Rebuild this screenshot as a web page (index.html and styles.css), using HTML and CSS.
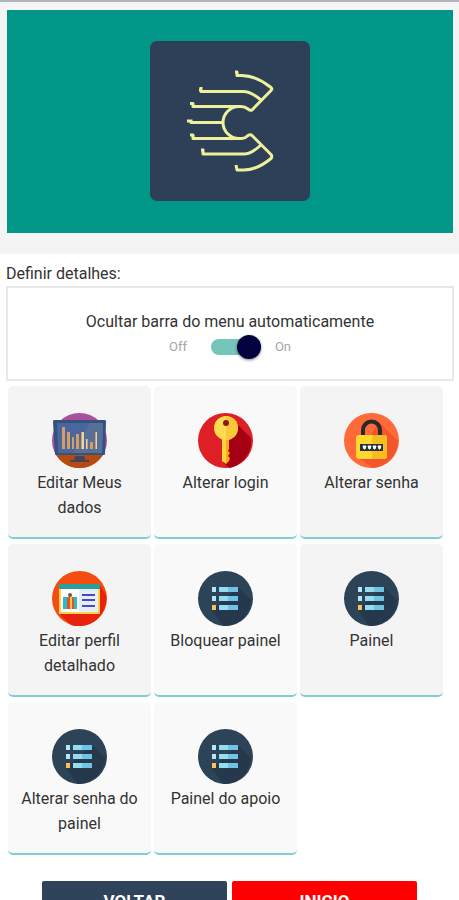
FILE: index.html
```html
<!DOCTYPE html>
<html lang="pt-BR">
<head>
    <meta charset="UTF-8">
    <meta name="viewport" content="width=device-width, initial-scale=1.0">
    <title>Definir detalhes</title>
    <link rel="stylesheet" href="styles.css">
</head>
<body>

    <!-- Shared icon -->
    <svg class="sprite" aria-hidden="true">
        <symbol id="icon-list" viewBox="0 0 55 55">
            <circle cx="27.5" cy="27.5" r="27.5" fill="#2c4358"/>
            <path d="M40 16 L53 29 A27.5 27.5 0 0 1 25 55 L14 39 Z" fill="#26394c"/>
            <path d="M14 16h4v5h-4zM14 25h4v5h-4z" fill="#b4e7f8"/>
            <path d="M14 34h4v5h-4z" fill="#f6c358"/>
            <path d="M21 16h19v5h-19zM21 25h19v5h-19zM21 34h19v5h-19z" fill="#6fc4e6"/>
            <path d="M21 16h9v5h-9zM21 25h9v5h-9zM21 34h9v5h-9z" fill="#93dcf2"/>
        </symbol>
    </svg>

    <header class="header">
        <div class="banner">
            <svg class="logo" viewBox="0 0 160 160" role="img" aria-label="Logo">
                <rect width="160" height="160" rx="7" fill="#2e4057"/>
                <g fill="none" stroke="#eff09c" stroke-width="3" stroke-linejoin="round">
                    <path d="M85 31h2v3.500h5q15 .5 29 12q1.500 1.500 0 3L102 69q-1.500 1-4-1-3-2.500-7-2.500H43v-3h-3"/>
                    <path d="M51 46v4.500H93q8 0 18 8.500M49 49h3"/>
                    <path d="M91 65.500h-2a16 16 0 0 0 0 32h2"/>
                    <path d="M73 81.500H41v-3M37 80h5"/>
                    <path d="M40 94h3v3.500h49q3 0 6-3 2.500-1.500 4 0l19 19q1.500 2 0 4-14 11.500-27 11.500h-7l-1-5"/>
                    <path d="M53 108v5h41q7 0 17-9M51 109h3"/>
                </g>
            </svg>
        </div>
    </header>

    <main>
        <section class="details">
            <h1 class="details-title">Definir detalhes:</h1>
            <div class="details-box">
                <p class="details-label" id="hideMenuLabel">Ocultar barra do menu automaticamente</p>
                <label class="switch">
                    <span>Off</span>
                    <input type="checkbox" role="switch" class="switch-input" aria-labelledby="hideMenuLabel" checked>
                    <span>On</span>
                </label>
            </div>
        </section>

        <nav class="cards">
            <a class="card" href="#dados">
                <svg class="card-icon" viewBox="0 0 55 55" aria-hidden="true">
                    <circle cx="27.5" cy="27.5" r="27.5" fill="#a9519b"/>
                    <path d="M3 40h49a27.5 27.5 0 0 1-49 0z" fill="#b94a0d"/>
                    <path d="M2 7h51q1 0 1 2l-1 32q0 1-1 1H4q-1 0-1-1L1 9q0-2 1-2z" fill="#34517f"/>
                    <path d="M5 10h46l-1 30H6z" fill="#49679c"/>
                    <path d="M38 10h13l-1 30H21z" fill="#567198"/>
                    <path d="M23 43h9l1 4h4v2H18v-2h4z" fill="#40445c"/>
                    <path d="M10 14h3v22h-3zM15 19h3v17h-3zM20 24h2v12h-2zM24 21h3v15h-3zM29 19h3v17h-3zM34 26h2v10h-2zM38 29h3v7h-3zM43 19h2v17h-2z" fill="#d69c65"/>
                    <path d="M30 19h2v17h-2zM34 26h1v10h-1zM44 19h1v17h-1z" fill="#e9d3aa"/>
                </svg>
                <span>Editar Meus dados</span>
            </a>
            <a class="card card-light" href="#login">
                <svg class="card-icon" viewBox="0 0 55 55" aria-hidden="true">
                    <circle cx="27.5" cy="27.5" r="27.5" fill="#df1f26"/>
                    <path d="M36 8l17 17A27.5 27.5 0 0 1 31 55l-6-6z" fill="#a50014"/>
                    <path d="M24 24h7v12l-1 2 2 2-2 3 2 2-1 3-3 3-4-3z" fill="#f7ac18"/>
                    <path d="M24 24h4v26l-4-2z" fill="#ffd33c"/>
                    <circle cx="28" cy="15" r="12" fill="#ffdb4f"/>
                    <path d="M28 3a12 12 0 0 1 0 24z" fill="#f9c838"/>
                    <circle cx="28" cy="10" r="3" fill="#8c1717"/>
                </svg>
                <span>Alterar login</span>
            </a>
            <a class="card" href="#senha">
                <svg class="card-icon" viewBox="0 0 55 55" aria-hidden="true">
                    <circle cx="27.5" cy="27.5" r="27.5" fill="#ff6a3b"/>
                    <path d="M35 9l19 19A27.5 27.5 0 0 1 29 55L13 44z" fill="#f5552d"/>
                    <path d="M19 23v-6a8.5 8.500 0 0 1 17 0v6" fill="none" stroke="#292929" stroke-width="4"/>
                    <rect x="12" y="22" width="31" height="24" rx="3" fill="#ffd82e"/>
                    <path d="M28 22h12q3 0 3 3v18q0 3-3 3H28z" fill="#f6bd20"/>
                    <path d="M16 31h23v7H16z" fill="#28313c"/>
                    <path d="M19 33h3l-1 3h-1zM24 33h3l-1 3h-1zM29 33h3l-1 3h-1zM34 33h3l-1 3h-1z" fill="#fff" stroke="#fff" stroke-width="1"/>
                </svg>
                <span>Alterar senha</span>
            </a>
            <a class="card" href="#perfil">
                <svg class="card-icon" viewBox="0 0 55 55" aria-hidden="true">
                    <circle cx="27.5" cy="27.5" r="27.5" fill="#f34d10"/>
                    <path d="M48 14l6 10A27.5 27.5 0 0 1 19 54L7 43z" fill="#e8230b"/>
                    <path d="M7 13h41v30H7z" fill="#ffd04c"/>
                    <path d="M9 17h18v24H9z" fill="#fff"/>
                    <path d="M27 17h19v24H27z" fill="#e6edf5"/>
                    <path d="M7 13h41v5H7z" fill="#289f9c"/>
                    <path d="M11 26h14v12H11z" fill="#21bfd1"/>
                    <path d="M15 27l3-2 4 2v11h-7z" fill="#e65322"/>
                    <path d="M18 25h2v13h-2z" fill="#ffc34d"/>
                    <circle cx="18" cy="24" r="2" fill="#76553c"/>
                    <path d="M30 24h13M30 29h13M30 35h13" stroke="#454bc0" stroke-width="2"/>
                </svg>
                <span>Editar perfil detalhado</span>
            </a>
            <a class="card card-light" href="#bloquear">
                <svg class="card-icon" aria-hidden="true"><use href="#icon-list"/></svg>
                <span>Bloquear painel</span>
            </a>
            <a class="card" href="#painel">
                <svg class="card-icon" aria-hidden="true"><use href="#icon-list"/></svg>
                <span>Painel</span>
            </a>
            <a class="card card-light" href="#senha-painel">
                <svg class="card-icon" aria-hidden="true"><use href="#icon-list"/></svg>
                <span>Alterar senha do painel</span>
            </a>
            <a class="card card-light" href="#apoio">
                <svg class="card-icon" aria-hidden="true"><use href="#icon-list"/></svg>
                <span>Painel do apoio</span>
            </a>
        </nav>

        <div class="actions">
            <button type="button" class="btn btn-back">VOLTAR</button>
            <button type="button" class="btn btn-home">INICIO</button>
        </div>
    </main>

</body>
</html>
```
FILE: styles.css
```css
* {
    box-sizing: border-box;
}
body {
    margin: 0;
    font-family: Roboto, "Liberation Sans", sans-serif;
    font-size: 16px;
    line-height: 25px;
    color: #333;
    background-color: #fff;
}
.sprite {
    display: none;
}

/* Header */
.header {
    padding: 8px 6px 21px 7px;
    border-top: 2px solid #b1b5b9;
    background-color: #f4f4f4;
}
.banner {
    display: flex;
    justify-content: center;
    padding: 31px 0 32px;
    background-color: #009688;
}
.logo {
    width: 160px;
    height: 160px;
}

/* Details */
.details {
    padding: 7px 5px 5px 6px;
}
.details-title {
    margin: 0;
    font-size: 16px;
    font-weight: normal;
}
.details-box {
    display: flex;
    flex-direction: column;
    align-items: center;
    padding: 21px 10px 20px;
    border: 2px solid #e8e8e8;
}
.details-label {
    margin: 0;
}
.switch {
    display: flex;
    align-items: center;
    font-size: 13px;
    color: #a5a5a5;
    cursor: pointer;
}
.switch-input {
    appearance: none;
    display: flex;
    align-items: center;
    width: 50px;
    height: 16px;
    margin: 0 14px 0 24px;
    border-radius: 8px;
    background-color: #bbb;
    cursor: pointer;
}
.switch-input::before {
    content: "";
    width: 24px;
    height: 24px;
    border-radius: 50%;
    background-color: #f1f1f1;
    box-shadow: 0 1px 3px rgba(0, 0, 0, 0.5);
}
.switch-input:checked {
    justify-content: flex-end;
    background-color: #76c5bb;
}
.switch-input:checked::before {
    background-color: #03023f;
}

/* Cards */
.cards {
    display: grid;
    grid-template-columns: repeat(3, 1fr);
    gap: 5px 3px;
    padding: 0 16px 0 8px;
}
.card {
    display: flex;
    flex-direction: column;
    align-items: center;
    gap: 2px;
    min-height: 153px;
    padding: 27px 8px 16px;
    border-bottom: 2px solid #7fcfd2;
    border-radius: 5px;
    background-color: #f4f4f4;
    color: #333;
    text-align: center;
    text-decoration: none;
}
.card-light {
    background-color: #f9f9f9;
}
.card-icon {
    width: 55px;
    height: 55px;
}

/* Buttons */
.actions {
    display: grid;
    grid-template-columns: 1fr 1fr;
    gap: 5px;
    padding: 26px 42px;
}
.btn {
    padding: 8px;
    border: none;
    border-radius: 2px;
    font-family: inherit;
    font-size: 17px;
    font-weight: bold;
    line-height: 25px;
    color: #fff;
    cursor: pointer;
}
.btn-back {
    background-color: #2f435b;
}
.btn-home {
    background-color: #f00;
}
```
